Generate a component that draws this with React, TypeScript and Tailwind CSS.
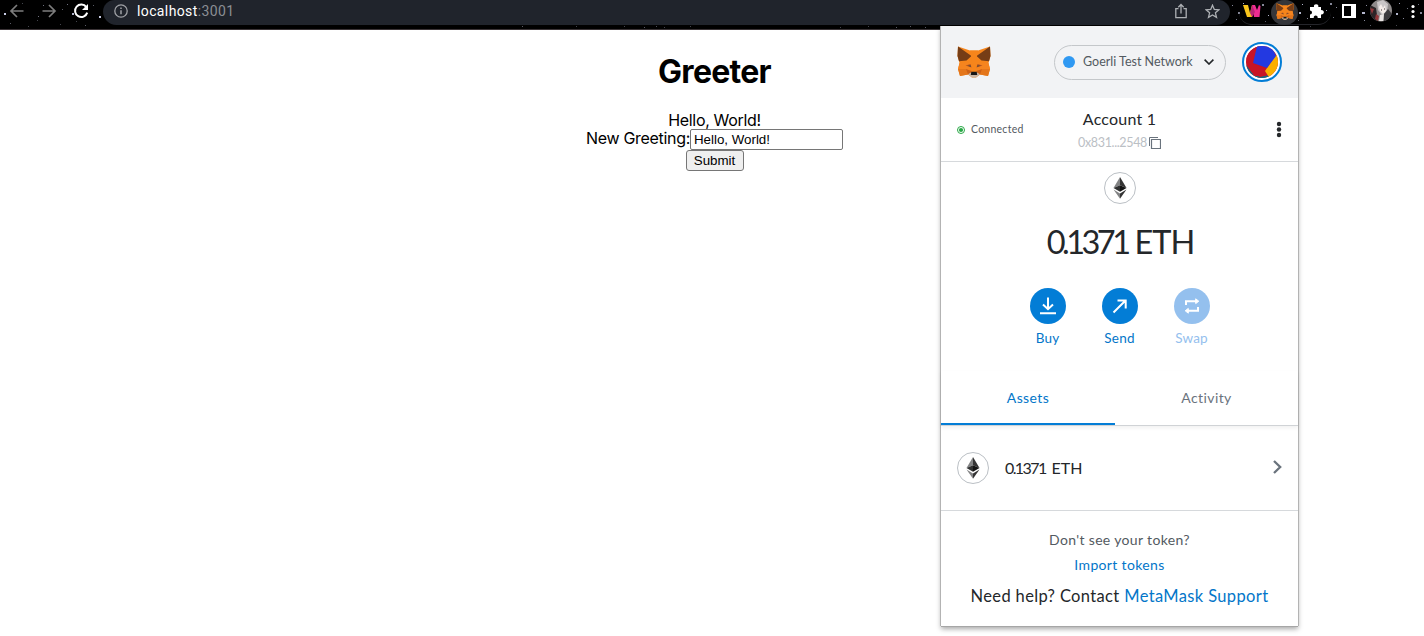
import React from "react";

const STARS: number[][] = [
  [4, 13, 2, 0.9], [10, 23, 1, 0.4], [22, 3, 1, 0.3], [38, 16, 1, 0.5], [43, 5, 1, 0.5], [37, 20, 1, 0.3], [62, 9, 1, 0.4], [72, 13, 2, 0.8],
  [60, 24, 1, 0.3], [85, 25, 1, 0.4], [93, 5, 1, 0.4], [99, 16, 2, 0.9], [28, 26, 1, 0.3], [67, 4, 1, 0.5], [76, 21, 1, 0.3],
  [1232, 5, 1, 0.6], [1238, 12, 2, 0.6], [1243, 3, 1, 0.8], [1236, 19, 1, 0.5], [1262, 4, 2, 0.6], [1268, 15, 1, 0.8], [1272, 8, 1, 0.7],
  [1265, 21, 1, 0.4], [1299, 12, 2, 0.8], [1302, 4, 1, 0.8], [1307, 18, 1, 0.6], [1298, 20, 1, 0.4], [1326, 10, 1, 0.7], [1330, 3, 2, 0.6],
  [1333, 17, 1, 0.5], [1336, 7, 1, 0.6], [1362, 12, 3, 0.8], [1366, 5, 1, 0.6], [1364, 20, 1, 0.6], [1396, 13, 2, 0.8], [1399, 3, 1, 0.7],
  [1403, 18, 1, 0.6], [1407, 8, 1, 0.5], [1420, 12, 2, 0.6], [1418, 4, 1, 0.5], [1310, 26, 1, 0.3], [1370, 25, 1, 0.4], [1396, 25, 1, 0.3],
  [522, 26, 1, 0.4], [576, 26, 1, 0.3], [624, 26, 1, 0.3], [644, 27, 1, 0.4], [656, 26, 1, 0.35], [664, 27, 1, 0.3], [690, 26, 1, 0.3],
  [840, 27, 1, 0.3], [868, 26, 1, 0.3], [896, 27, 1, 0.4], [910, 26, 1, 0.4], [925, 27, 1, 0.4],
];

function Fox({ className }: { className: string }) {
  return (
    <svg className={className} viewBox="0 0 34 32">
      <path d="M1 0.5 13 4.5H21L33 0.5 33.5 10 31.5 17 33 23 31 30 23 28.5 19 31.5H15L11 28.5 3 30 1 23 2.5 17 0.5 10Z" fill="#f6851b" />
      <path d="M2.5 17 11 16.5 15 22 14.5 27 1 23ZM31.5 17 23 16.5 19 22 19.5 27 33 23Z" fill="#f5841f" />
      <path d="M1 23H9L14 26.5 11 28.5 3 30ZM33 23H25L20 26.5 23 28.5 31 30Z" fill="#e4761b" />
      <path d="M9 23 14.5 25 14 28 11 28.5ZM25 23 19.5 25 20 28 23 28.5Z" fill="#cd6116" />
      <path d="M1 0.5 14.5 10 9.5 14.5 2 15.2 0.5 10ZM33 0.5 19.5 10 24.5 14.5 32 15.2 33.5 10Z" fill="#763d16" />
      <path d="M13 4.5H21L19 15V24H15V15Z" fill="#f6851b" />
      <path d="M8.5 19.5 13.5 18 14.5 21.5ZM25.5 19.5 20.5 18 19.5 21.5Z" fill="#b9571b" />
      <path d="M10.5 19.8 13.5 19.2 14 21ZM23.5 19.8 20.5 19.2 20 21Z" fill="#5b4a43" />
      <path d="M11 28.2 14 26.5H20L23 28.2 19 31.6H15Z" fill="#c9b5a4" />
      <path d="M14.3 25.8H19.7L20.2 29H13.8Z" fill="#161616" />
    </svg>
  );
}

function EthMark() {
  return (
    <div className="flex size-8 shrink-0 items-center justify-center rounded-full border border-[#bbc0c5] bg-white">
      <svg className="h-[22px] w-[14px]" viewBox="0 0 14 22">
        <path d="M7 0 0.5 11 7 8.2Z" fill="#828384" />
        <path d="M7 0 13.5 11 7 8.2Z" fill="#343434" />
        <path d="M0.5 11 7 8.2V14.8Z" fill="#2f3030" />
        <path d="M13.5 11 7 8.2V14.8Z" fill="#131313" />
        <path d="M0.5 12.6 7 16.4V21.8Z" fill="#828384" />
        <path d="M13.5 12.6 7 16.4V21.8Z" fill="#343434" />
      </svg>
    </div>
  );
}

function Toolbar() {
  return (
    <header className="relative flex h-[30px] items-start overflow-hidden border-b border-[#3b3437] bg-black">
      <svg className="absolute inset-0 h-[30px] w-[1424px]" viewBox="0 0 1424 30">
        {STARS.map(([x, y, s, o], i) => (
          <rect key={i} x={x} y={y} width={s} height={s > 1 ? 2 : 1} fill="#dfe3ff" opacity={o} />
        ))}
      </svg>
      <div className="relative flex h-[22px] w-[103px] shrink-0 items-center">
        <svg className="h-[22px] w-[103px]" viewBox="0 0 103 22" fill="none">
          <path d="M23.5 11H11M17 5 11 11 17 17" stroke="#7d7d7d" strokeWidth="1.7" />
          <path d="M42.5 11H55M49 5 55 11 49 17" stroke="#7d7d7d" strokeWidth="1.7" />
          <path d="M86.3 7.2A6.2 6.2 0 1 0 87.2 12.6" stroke="#fff" strokeWidth="2" />
          <path d="M88 4V10H82Z" fill="#fff" />
        </svg>
      </div>
      <div className="relative flex h-[25px] w-[1127px] shrink-0 items-start rounded-b-[14px] rounded-tl-[12px] rounded-tr-[12px] bg-[#20242c] pl-[11px]">
        <svg className="mt-1 size-[14px]" viewBox="0 0 14 14" fill="none">
          <circle cx="7" cy="7" r="6.2" stroke="#a0a2a6" strokeWidth="1.3" />
          <path d="M7 6.2V10.3M7 3.5V5" stroke="#a0a2a6" strokeWidth="1.5" />
        </svg>
        <div className="ml-[9px] h-[22px] flex-1 font-['Roboto','Liberation_Sans',sans-serif] text-[14px] leading-[22px] tracking-[0.38px] text-[#8b8e94]">
          <span className="text-white">localhost</span>:3001
        </div>
        <svg className="mt-[3px] mr-[18px] h-4 w-3" viewBox="0 0 12 16" fill="none" stroke="#adb0b4" strokeWidth="1.3">
          <path d="M3.5 5.7H0.8V14.7H11.2V5.7H8.5M6 10.5V1.6M3.3 4.2 6 1.5 8.7 4.2" />
        </svg>
        <svg className="mt-1 mr-[10px] size-[15px]" viewBox="0 0 15 15" fill="none" stroke="#adb0b4" strokeWidth="1.3">
          <path d="M7.5 1.2 9.3 5.4 13.9 5.8 10.4 8.8 11.5 13.4 7.5 10.9 3.5 13.4 4.6 8.8 1.1 5.8 5.7 5.4Z" />
        </svg>
      </div>
      <div className="relative ml-[9px] flex h-[25px] w-[92px] shrink-0 items-start rounded-b-[13px] border-b border-[#25262b] pl-[4px]">
        <svg className="mt-1 h-[14px] w-[18px] shrink-0" viewBox="0 0 18 14">
          <path d="M0 1H5L7 9 9 1 11 8 9 13H4Z" fill="#f8c51c" />
          <path d="M9 1 12 1 14 6 16 1 17.5 2 16.5 13H11Z" fill="#ed2c91" />
          <path d="M9 1 7 9 9 13 12 8Z" fill="#b92574" />
        </svg>
        <div className="ml-[10px] flex h-[25px] w-[27px] shrink-0 items-start justify-center rounded-[13px] bg-[#35363a] pt-[3px]">
          <Fox className="h-[17px] w-[18px]" />
        </div>
        <svg className="mt-[3px] ml-[11px] size-4 shrink-0" viewBox="0 0 16 16">
          <path d="M1 4H5A2.2 2.2 0 1 1 9.3 4H12V7.2A2.2 2.2 0 1 1 12 11.4V15H8.6A2 2 0 1 0 4.8 15H1V11.4A2 2 0 1 0 1 7.4Z" fill="#fff" />
        </svg>
      </div>
      <svg className="relative mt-1 ml-[11px] h-[14px] w-[14px] shrink-0" viewBox="0 0 14 14">
        <path d="M0 0H14V14H0ZM2 2V12H9V2Z" fill="#fff" fillRule="evenodd" />
      </svg>
      <svg className="relative ml-[14px] h-[22px] w-[22px] shrink-0" viewBox="0 0 22 22">
        <defs>
          <clipPath id="avatar"><circle cx="11" cy="10.5" r="11" /></clipPath>
        </defs>
        <g clipPath="url(#avatar)">
          <rect width="22" height="22" fill="#8f8b8b" />
          <path d="M0 5 6 8 8 22H0Z" fill="#2b2527" />
          <path d="M7 2 13 0 18 4 17 12 12 15 8 10Z" fill="#c9c5c6" />
          <path d="M9 7 11 4 13 8 15 5 16 11 13 14 10 11Z" fill="#f4ece8" />
          <path d="M14 14 18 9 22 14V22H14Z" fill="#3c3a3d" />
          <path d="M0 8 4 9 2 14ZM6 14 9 16 8 21 5 19Z" fill="#93383b" />
          <path d="M11 10H12M14 9H15" stroke="#3c3235" />
          <path d="M10 15 14 14 13 21H9Z" fill="#e9e5e3" />
        </g>
      </svg>
      <svg className="relative ml-[19px] h-[22px] w-1 shrink-0" viewBox="0 0 4 22" fill="#fff">
        <circle cx="2" cy="6.5" r="1.6" /><circle cx="2" cy="11.5" r="1.6" /><circle cx="2" cy="16.5" r="1.6" />
      </svg>
    </header>
  );
}

function Greeter() {
  return (
    <main className="flex flex-col items-center pl-[5px] font-['Inter','Liberation_Sans',sans-serif] text-black">
      <h1 className="mt-[22px] h-10 text-[32px] leading-10 font-bold tracking-[-0.72px]">Greeter</h1>
      <p className="mt-[19px] h-[18px] text-[16px] leading-[18px] tracking-[-0.33px]">Hello, World!</p>
      <div className="flex h-[21px] items-start">
        <label htmlFor="greeting" className="text-[16px] leading-[18px] tracking-[-0.32px]">New Greeting:</label>
        <input
          id="greeting"
          defaultValue="Hello, World!"
          className="h-[21px] w-[153px] rounded-[2px] border border-[#767676] bg-white px-[3px] font-['Liberation_Sans',sans-serif] text-[13.33px]"
        />
      </div>
      <button className="h-[21px] w-[58px] rounded-[3px] border border-[#767676] bg-[#efefef] font-['Liberation_Sans',sans-serif] text-[13.33px] leading-[19px]">Submit</button>
    </main>
  );
}

function Action({ label, faded, children }: { label: string; faded?: boolean; children: React.ReactNode }) {
  return (
    <div className={faded ? "flex w-[72px] flex-col items-center text-[#94c0ee]" : "flex w-[72px] flex-col items-center text-[#0376c9]"}>
      <div className={faded ? "flex size-9 items-center justify-center rounded-full bg-[#94c0ee]" : "flex size-9 items-center justify-center rounded-full bg-[#037dd6]"}>
        <svg className="size-5" viewBox="0 0 20 20" fill="none" stroke="#fff" strokeWidth="2">{children}</svg>
      </div>
      <span className="mt-1 text-[13.5px] leading-5 tracking-[0.2px]">{label}</span>
    </div>
  );
}

function Wallet() {
  return (
    <aside className="absolute top-[26px] left-[941px] h-[600px] w-[357px] bg-white font-['Lato','Liberation_Sans',sans-serif] text-[#24272a] shadow-[0_1px_0_0_#a6a6a6,1px_0_0_0_#b3b3b3,-1px_0_0_0_#b3b3b3,0_3px_5px_0_rgba(0,0,0,0.35)]">
      <div className="flex h-[72px] items-center bg-[#f2f3f5] pl-4">
        <Fox className="h-8 w-[34px]" />
        <div className="ml-[63px] flex h-[35px] w-[172px] items-center rounded-full border border-[#c4c7ca] pl-2">
          <span className="size-3 rounded-full bg-[#3099f2]" />
          <span className="ml-2 w-[111px] text-[12.5px] whitespace-nowrap text-[#535a61]">Goerli Test Network</span>
          <svg className="ml-[10px] h-[6px] w-[10px]" viewBox="0 0 10 6" fill="none" stroke="#24272a" strokeWidth="1.6"><path d="M0.6 0.6 5 5 9.4 0.6" /></svg>
        </div>
        <svg className="ml-4 size-10" viewBox="0 0 40 40">
          <defs>
            <clipPath id="ident"><circle cx="20" cy="20" r="16" /></clipPath>
          </defs>
          <circle cx="20" cy="20" r="19" fill="#fff" stroke="#037dd6" strokeWidth="2" />
          <g clipPath="url(#ident)">
            <rect width="40" height="40" fill="#c81426" />
            <path d="M2 20 10 31 18 35 27 33V40H2Z" fill="#126c83" />
            <path d="M0 0H18L11 22 24 26 24 34 12 34 5 20Z" fill="#c81426" />
            <path d="M34 13 40 14V40H30L23 29Z" fill="#faaf00" />
            <path d="M16 0H28L34 14 25 26 11 21Z" fill="#2339e1" />
          </g>
        </svg>
      </div>
      <div className="grid h-16 grid-cols-[100px_1fr_100px] items-center border-b border-[#d6d9dc]">
        <div className="flex items-center pl-4 text-[10.5px] tracking-[0.25px] text-[#535a61]">
          <svg className="size-2 shrink-0" viewBox="0 0 8 8"><circle cx="4" cy="4" r="3.5" fill="none" stroke="#28a745" /><circle cx="4" cy="4" r="2.1" fill="#28a745" /></svg>
          <span className="ml-[6px]">Connected</span>
        </div>
        <div className="flex flex-col items-center pt-[2px]">
          <span className="text-[16px] leading-[23px] tracking-[0.2px]">Account 1</span>
          <span className="flex h-[25px] items-center pt-[2px] text-[12.5px] tracking-[-0.35px] text-[#bbc0c5]">
            0x831...2548
            <svg className="ml-[2px] size-3" viewBox="0 0 12 12" fill="none" stroke="#6a737d"><path d="M2.5 2.5H11.5V11.5H2.5Z" strokeWidth="1.2" /><path d="M0.5 9V0.5H9" /></svg>
          </span>
        </div>
        <svg className="mr-[17px] h-4 w-1 justify-self-end overflow-visible" viewBox="0 0 4 16" fill="#24272a"><circle cx="2" cy="2" r="2.2" /><circle cx="2" cy="7.5" r="2.2" /><circle cx="2" cy="13" r="2.2" /></svg>
      </div>
      <div className="flex h-[209px] flex-col items-center pt-[10px]">
        <EthMark />
        <div className="mt-[16px] mb-px flex gap-[7px] pl-[2px] text-[32.5px] leading-[44px] whitespace-nowrap">
          <span className="tracking-[-3.5px]">0.1371</span>
          <span className="tracking-[-1px]">ETH</span>
        </div>
        <div className="mt-[23px] flex">
          <Action label="Buy"><path d="M10 1.5V13M5 8.5 10 13.2 15 8.5M2 17.3H18" /></Action>
          <Action label="Send"><path d="M3.5 16.5 15.5 4.5M7.5 4.5H15.7V12.5" /></Action>
          <Action label="Swap" faded><path d="M4 9V5.2H14M16 11V14.8H6" /><path d="M13.7 2.8 16.8 5.2 13.7 7.6ZM6.3 12.4 3.2 14.8 6.3 17.2Z" fill="#fff" strokeWidth="1" /></Action>
        </div>
      </div>
      <div className="flex h-[55px] border-b border-[#d0d3d6] text-[14px] tracking-[0.4px] shadow-[0_2px_4px_rgba(0,0,0,0.06)]">
        <div className="flex h-[54px] w-[174px] items-center justify-center border-b-2 border-[#037dd6] pt-px text-[#0376c9]">Assets</div>
        <div className="flex flex-1 items-center justify-center pb-px text-[#6a737d]">Activity</div>
      </div>
      <div className="flex h-[85px] items-center border-b border-[#d6d9dc] px-4 pb-px">
        <EthMark />
        <span className="ml-4 flex flex-1 gap-[6px] text-[16px]">
          <span className="tracking-[-1.6px]">0.1371</span>
          <span>ETH</span>
        </span>
        <svg className="mb-[2px] h-[14px] w-[9px]" viewBox="0 0 9 14" fill="none" stroke="#6a737d" strokeWidth="2.3"><path d="M1 1 7.2 7 1 13" /></svg>
      </div>
      <div className="flex flex-col items-center pt-[16px] text-[14px] tracking-[0.35px]">
        <span className="leading-[25px] text-[#535a61]">Don't see your token?</span>
        <span className="leading-[25px] text-[#0376c9]">Import tokens</span>
        <p className="mt-[7px] text-[16.5px] leading-6 tracking-[0.36px] whitespace-nowrap">Need help? Contact <span className="text-[#0376c9]">MetaMask Support</span></p>
      </div>
    </aside>
  );
}

export default function App() {
  return (
    <div className="relative h-[636px] w-[1424px] overflow-hidden bg-white">
      <Toolbar />
      <Greeter />
      <Wallet />
    </div>
  );
}
